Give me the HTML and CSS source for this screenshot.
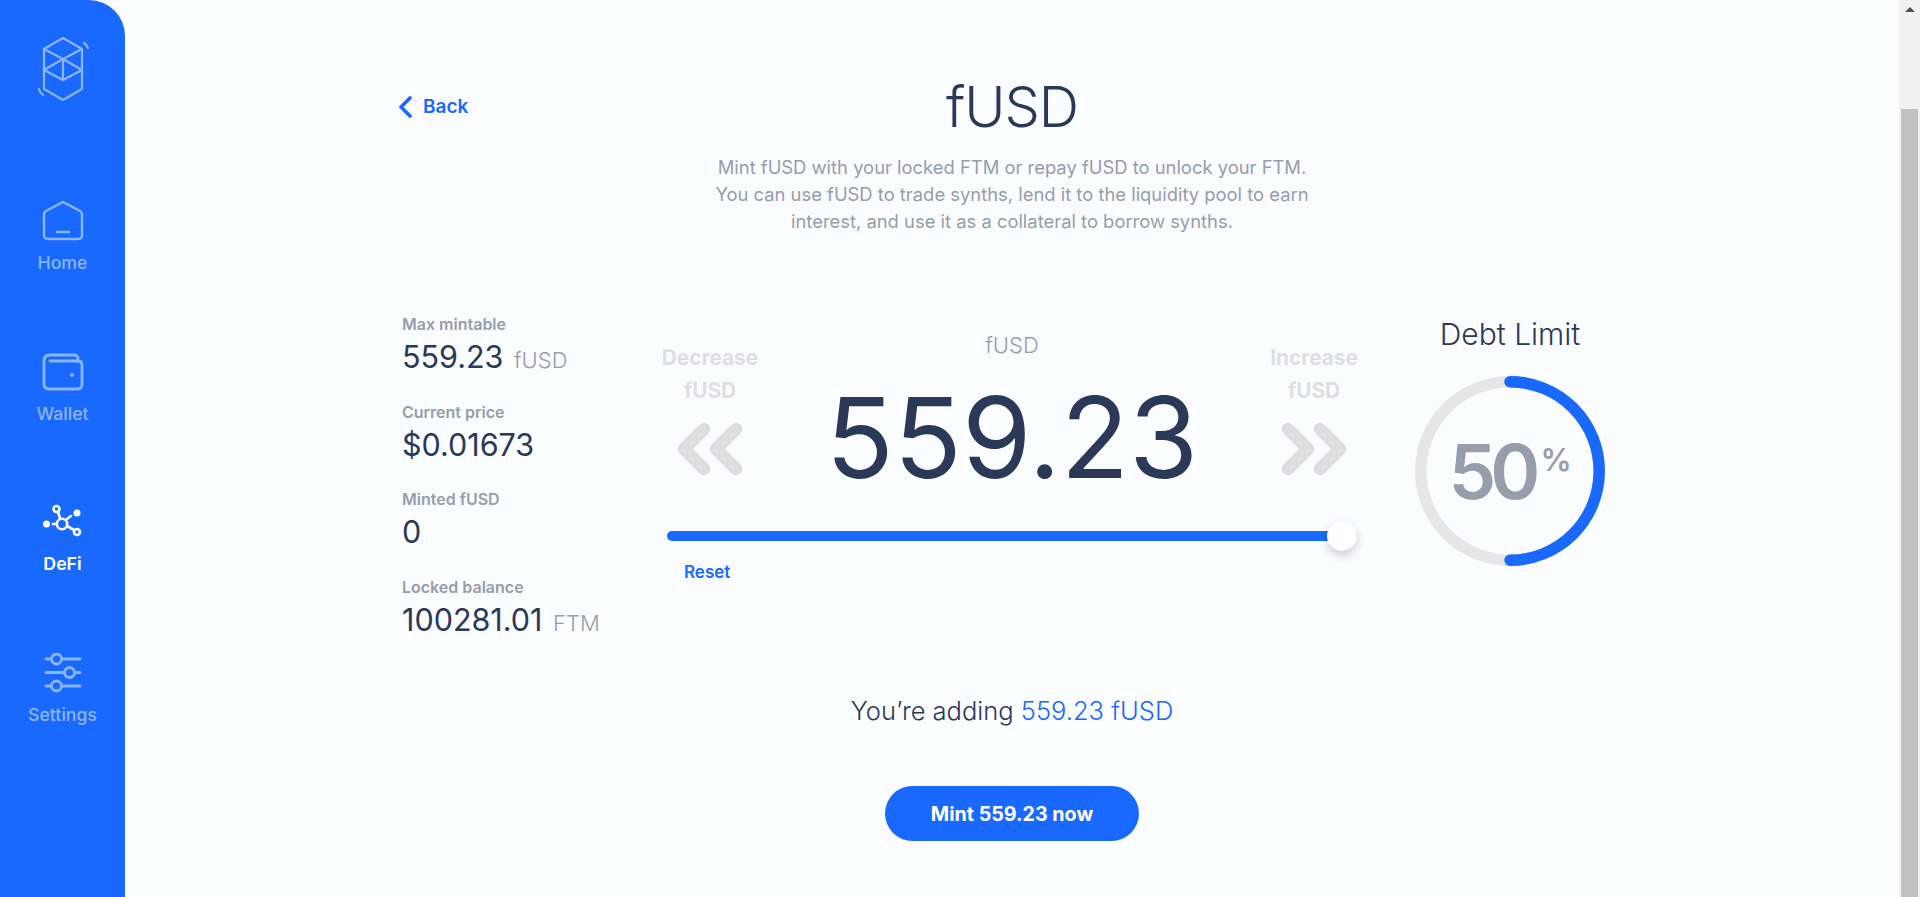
FILE: index.html
```html
<!DOCTYPE html>
<html lang="en">
<head>
<meta charset="utf-8">
<title>fUSD</title>
<link rel="stylesheet" href="styles.css">
</head>
<body>
<div class="app">
  <aside class="sidebar">
    <svg class="logo" width="52" height="64" viewBox="0 0 52 64" fill="none" stroke="currentColor" stroke-width="2.200" stroke-linecap="round" stroke-linejoin="round">
      <path d="M25 1 44 12V52L25 63 6 52V12Z"/>
      <path d="M6 12 25 22 44 12M6 33 25 43 44 33M6 33 25 22 44 33M25 22V43"/>
      <path d="M46 6Q49 8 50 11M1 52Q2 56 5 58"/>
    </svg>
    <nav class="nav">
      <a class="nav-item">
        <svg width="42" height="40" viewBox="0 0 42 40" fill="none" stroke="currentColor" stroke-width="2.400" stroke-linecap="round" stroke-linejoin="round">
          <path d="M21 1 38 10Q40 11 40 14V34Q40 38 36 38H6Q2 38 2 34V14Q2 11 4 10Z"/>
          <path d="M15 31H27" stroke-width="2.400"/>
        </svg>
        <span>Home</span>
      </a>
      <a class="nav-item">
        <svg width="42" height="40" viewBox="0 0 42 40" fill="none" stroke="currentColor" stroke-width="2.800" stroke-linecap="round" stroke-linejoin="round">
          <path d="M36 9V7Q36 3 32 3H8Q2 3 2 9V32Q2 37 7 37H35Q40 37 40 32V13Q40 9 36 9H8"/>
          <circle cx="30" cy="23" r="2" fill="currentColor" stroke="none"/>
        </svg>
        <span>Wallet</span>
      </a>
      <a class="nav-item active">
        <svg width="42" height="40" viewBox="0 0 42 40" fill="none" stroke="currentColor" stroke-width="2.600" stroke-linecap="round">
          <circle cx="20" cy="22" r="5.200"/>
          <circle cx="14.500" cy="7" r="3"/>
          <circle cx="35" cy="30" r="3"/>
          <circle cx="35" cy="11" r="3.500" fill="currentColor" stroke="none"/>
          <circle cx="4.500" cy="22" r="3.500" fill="currentColor" stroke="none"/>
          <path d="M16 10 18 16M25 24 32 28M11 22H13M25 17 29 14"/>
        </svg>
        <span>DeFi</span>
      </a>
      <a class="nav-item">
        <svg width="42" height="40" viewBox="0 0 42 40" fill="none" stroke="currentColor" stroke-width="2.800" stroke-linecap="round">
          <path d="M4 6H9M20 6H38M4 19.500H22M33 19.500H38M4 33H9M20 33H38"/>
          <circle cx="14.500" cy="6" r="5"/>
          <circle cx="27.500" cy="19.500" r="5"/>
          <circle cx="14.500" cy="33" r="5"/>
        </svg>
        <span>Settings</span>
      </a>
    </nav>
  </aside>

  <main class="main">
    <div class="content">
      <header class="header">
        <a class="back">
          <svg width="14" height="22" viewBox="0 0 14 22" fill="none" stroke="currentColor" stroke-width="3.600" stroke-linecap="round" stroke-linejoin="round"><path d="M12 2 3 11 12 20"/></svg>
          <span>Back</span>
        </a>
        <h1 class="title">fUSD</h1>
        <p class="desc">Mint fUSD with your locked FTM or repay fUSD to unlock your FTM.<br>You can use fUSD to trade synths, lend it to the liquidity pool to earn<br>interest, and use it as a collateral to borrow synths.</p>
      </header>

      <section class="panel">
        <dl class="stats">
          <div class="stat"><dt>Max mintable</dt><dd>559.23 <small>fUSD</small></dd></div>
          <div class="stat"><dt>Current price</dt><dd>$0.01673</dd></div>
          <div class="stat"><dt>Minted fUSD</dt><dd>0</dd></div>
          <div class="stat"><dt>Locked balance</dt><dd>100281.01 <small>FTM</small></dd></div>
        </dl>

        <div class="control">
          <div class="control-top">
            <div class="stepper">
              <span>Decrease<br>fUSD</span>
              <svg width="66" height="54" viewBox="0 0 66 54" fill="none" stroke="currentColor" stroke-width="12.500" stroke-linecap="round" stroke-linejoin="round"><path d="M27 7 7 27 27 47M59 7 39 27 59 47"/></svg>
            </div>
            <div class="amount">
              <div class="amount-unit">fUSD</div>
              <div class="amount-value">559.23</div>
            </div>
            <div class="stepper">
              <span>Increase<br>fUSD</span>
              <svg width="66" height="54" viewBox="0 0 66 54" fill="none" stroke="currentColor" stroke-width="12.500" stroke-linecap="round" stroke-linejoin="round"><path d="M7 7 27 27 7 47M39 7 59 27 39 47"/></svg>
            </div>
          </div>
          <div class="slider"><div class="knob"></div></div>
          <a class="reset">Reset</a>
        </div>

        <div class="limit">
          <h2>Debt Limit</h2>
          <div class="gauge">
            <svg width="190" height="190" viewBox="0 0 190 190" fill="none" stroke-width="11.500">
              <circle cx="95" cy="95" r="89.250" stroke="#e6e6e6"/>
              <path d="M95 5.750A89.250 89.250 0 0 1 95 184.250" stroke="#1969ff" stroke-linecap="round"/>
            </svg>
            <div class="gauge-label"><span class="pct">50</span><sup>%</sup></div>
          </div>
        </div>
      </section>

      <p class="summary">You’re adding <span>559.23 fUSD</span></p>
      <div class="cta"><button class="mint">Mint 559.23 now</button></div>
    </div>
  </main>

  <div class="scrollbar">
    <div class="arrow"></div>
    <div class="thumb"></div>
  </div>
</div>
</body>
</html>
```
FILE: styles.css
```css
* { box-sizing: border-box; }
html, body { margin: 0; height: 100%; overflow: hidden; }
body { background: #fbfcff; color: #2a3957; font-family: "Inter", "Liberation Sans", sans-serif; }

.app { display: flex; height: 897px; }

.sidebar { width: 125px; flex: none; background: #1969ff; border-top-right-radius: 36px; display: flex; flex-direction: column; align-items: center; color: #8db4ff; padding-top: 37px; }
.logo { margin-left: 2px; }
.nav { display: flex; flex-direction: column; margin-top: 100px; width: 100%; }
.nav-item { height: 150.500px; display: flex; flex-direction: column; align-items: center; gap: 12px; font: 500 17.700px/20px "Inter", sans-serif; }
.nav-item.active { color: #fff; font-weight: 600; }

.main { flex: 1; min-width: 0; display: flex; justify-content: center; }
.content { width: 1220px; }

.header { display: grid; grid-template-columns: 1fr auto 1fr; padding-top: 71px; }
.back { grid-column: 1; grid-row: 1; align-self: center; margin-left: -4px; display: flex; align-items: center; gap: 11px; color: #1969ff; font: 600 19px/24px "Inter", sans-serif; }
.title { grid-column: 2; grid-row: 1; margin: 0; font-weight: 300; font-size: 56px; line-height: 72px; text-align: center; letter-spacing: -1px; }
.desc { grid-column: 1 / -1; margin: 11px 0 0; text-align: center; color: #969dab; font-size: 18.400px; line-height: 27px; }

.panel { display: grid; grid-template-columns: 265px 690px 265px; margin-top: 79px; height: 380px; }

.stats { margin: 0; }
.stat { height: 87.500px; }
.stat dt { font: 600 16px/20px "Inter", sans-serif; color: #969dab; }
.stat dd { margin: 5px 0 0; font-size: 30.500px; font-weight: 400; line-height: 36px; white-space: nowrap; }
.stat small { font-size: 22px; font-weight: 300; color: #969dab; margin-left: 2px; }

.control-top { display: grid; grid-template-columns: 86px 1fr 86px; }
.stepper { display: flex; flex-direction: column; align-items: center; color: #dfdfdf; padding-top: 27px; font-weight: 700; font-size: 20.800px; line-height: 33px; text-align: center; }
.stepper svg { margin-top: 15px; color: #dedede; }
.amount { text-align: center; }
.amount-unit { color: #969dab; font-size: 22px; font-weight: 300; line-height: 28px; margin-top: 17px; }
.amount-value { font-weight: 400; font-size: 112px; line-height: 120px; margin-top: 18px; }

.slider { height: 10px; margin-top: 34px; border-radius: 5px; background: #1969ff; position: relative; }
.knob { position: absolute; right: 0; top: -10px; width: 30px; height: 30px; border-radius: 50%; background: #fff; box-shadow: 0 4px 10px rgba(0,0,0,.2); }
.reset { display: block; margin: 21px 0 0 17px; color: #1969ff; font: 600 17px/20px "Inter", sans-serif; }

.limit { padding-left: 58px; }
.limit h2 { margin: 0; padding-top: 2px; font-weight: 300; font-size: 30px; line-height: 36px; text-align: center; width: 190px; white-space: nowrap; }
.gauge { position: relative; width: 190px; height: 190.500px; margin-top: 24px; }
.gauge svg { display: block; }
.gauge-label { position: absolute; inset: 0; display: flex; align-items: center; justify-content: center; color: #969dab; }
.pct { font-weight: 600; font-size: 76px; letter-spacing: -6px; line-height: 1; }
.gauge-label sup { font-size: 31px; font-weight: 600; line-height: 1; align-self: flex-start; margin-top: 68px; margin-left: 6px; }

.summary { margin: 0; text-align: center; font-size: 25.500px; font-weight: 300; line-height: 34px; }
.summary span { color: #1969ff; }
.cta { display: flex; justify-content: center; margin-top: 58px; }
.mint { width: 254px; height: 55px; border: 0; border-radius: 28px; background: #1969ff; color: #fff; font: 700 19.700px/24px "Inter", sans-serif; }

.scrollbar { width: 21px; flex: none; background: #f1f1f1; padding: 7px 2px 0; display: flex; flex-direction: column; align-items: center; }
.arrow { width: 0; height: 0; border-left: 5px solid transparent; border-right: 5px solid transparent; border-bottom: 5px solid #505050; }
.thumb { width: 17px; flex: 1; margin-top: 97px; background: #c1c1c1; }
```
